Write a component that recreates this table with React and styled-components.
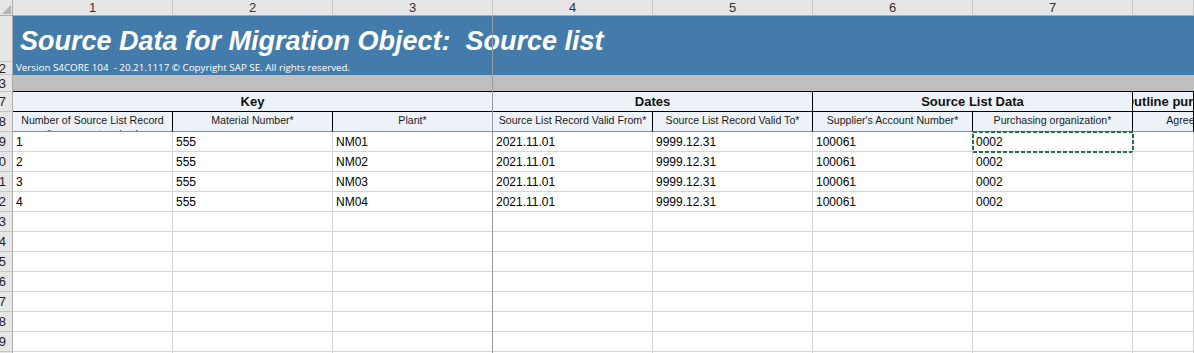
import React from "react";
import styled, { createGlobalStyle } from "styled-components";

const GlobalStyle = createGlobalStyle`
  body {
    margin: 0;
    background: #ffffff;
    overflow: hidden;
  }
`;

const COLS = [160, 160, 160, 160, 160, 160, 160, 61];

const Sheet = styled.div`
  position: relative;
  width: 1194px;
  height: 353px;
  overflow: hidden;
  font-family: "Liberation Sans", Arial, sans-serif;
  color: #000;
`;

const Row = styled.div`
  display: flex;
  height: ${(p) => p.h}px;
`;

const Corner = styled.div`
  position: relative;
  width: 13px;
  box-sizing: border-box;
  background: #e6e6e6;
  border-right: 1px solid #ababab;
  border-bottom: 1px solid #ababab;

  svg {
    position: absolute;
    right: 1px;
    bottom: 1px;
  }
`;

const ColHead = styled.div`
  width: ${(p) => p.w}px;
  box-sizing: border-box;
  background: #e6e6e6;
  border-right: 1px solid #c6c6c6;
  border-bottom: 1px solid #ababab;
  display: flex;
  align-items: center;
  justify-content: center;
  font-size: 13px;
  color: #333;
`;

const RowHead = styled.div`
  width: 13px;
  flex: none;
  box-sizing: border-box;
  background: #e6e6e6;
  border-right: 1px solid #ababab;
  border-bottom: 1px solid #c6c6c6;
  display: flex;
  align-items: center;
  justify-content: flex-end;
  padding-right: 6px;
  overflow: hidden;
  white-space: nowrap;
  font-size: 13px;
  color: #222;
`;

const Title = styled.div`
  flex: 1;
  background: #437cab;
  color: #fff;
  display: flex;
  align-items: center;
  padding: 5px 0 0 7px;
  white-space: pre;
  font-size: 27px;
  font-weight: 700;
  font-style: italic;
  line-height: 1;
`;

const Version = styled.div`
  flex: 1;
  background: #437cab;
  color: #fff;
  padding: 1px 0 0 3px;
  white-space: pre;
  font-family: "Open Sans", sans-serif;
  font-size: 9.8px;
  line-height: 1;
`;

const Band = styled.div`
  flex: 1;
  background: #bfbfbf;
  border-bottom: 1px solid #000;
`;

const GroupCell = styled.div`
  width: ${(p) => p.w}px;
  flex: none;
  box-sizing: border-box;
  background: #edf2f8;
  border-right: 1px solid #000;
  border-bottom: 1px solid #000;
  display: flex;
  align-items: center;
  justify-content: ${(p) => (p.clip ? "flex-start" : "center")};
  text-indent: ${(p) => (p.clip ? "-9px" : "0")};
  overflow: hidden;
  white-space: nowrap;
  font-weight: 700;
  font-size: 13px;
  color: #111;
`;

const HeadCell = styled.div`
  width: ${(p) => p.w}px;
  flex: none;
  box-sizing: border-box;
  background: #edf2f8;
  border-right: 1px solid #000;
  border-bottom: 1px solid #8c8c8c;
  padding-top: 1px;
  overflow: hidden;
`;

const HeadLabel = styled.div`
  width: 159px;
  text-align: center;
  font-size: 10.6px;
  line-height: 14px;
  color: #1a1a1a;
`;

const Cell = styled.div`
  position: relative;
  width: ${(p) => p.w}px;
  flex: none;
  box-sizing: border-box;
  border-right: 1px solid #d4d4d4;
  border-bottom: 1px solid #d4d4d4;
  padding: 3px 0 0 3px;
  font-size: 12px;
  line-height: 14px;
  white-space: nowrap;
`;

const Selection = styled.svg`
  position: absolute;
  left: -1px;
  top: -1px;
`;

const FreezeLine = styled.div`
  position: absolute;
  left: 492px;
  top: 16px;
  bottom: 0;
  width: 1px;
  background: #9a9a9a;
`;

const headers = [
  "Number of Source List Record (legacy system key)",
  "Material Number*",
  "Plant*",
  "Source List Record Valid From*",
  "Source List Record Valid To*",
  "Supplier's Account Number*",
  "Purchasing organization*",
  "Agreement Number",
];

const data = [
  ["1", "555", "NM01", "2021.11.01", "9999.12.31", "100061", "0002", ""],
  ["2", "555", "NM02", "2021.11.01", "9999.12.31", "100061", "0002", ""],
  ["3", "555", "NM03", "2021.11.01", "9999.12.31", "100061", "0002", ""],
  ["4", "555", "NM04", "2021.11.01", "9999.12.31", "100061", "0002", ""],
];

const groups = [
  { label: "Key", w: 480 },
  { label: "Dates", w: 320 },
  { label: "Source List Data", w: 320 },
  { label: "Outline purchase agreement", w: 61, clip: true },
];

export default function App() {
  const rows = [];
  for (let r = 0; r < 12; r++) {
    rows.push(data[r] || ["", "", "", "", "", "", "", ""]);
  }

  return (
    <>
      <GlobalStyle />
      <Sheet>
        <Row h={16}>
          <Corner>
            <svg width="9" height="9">
              <polygon points="9,0 9,9 0,9" fill="#b4b4b4" />
            </svg>
          </Corner>
          {COLS.map((w, i) => (
            <ColHead key={i} w={w}>
              {i < 7 ? i + 1 : ""}
            </ColHead>
          ))}
        </Row>

        <Row h={46}>
          <RowHead />
          <Title>Source Data for Migration Object:  Source list</Title>
        </Row>
        <Row h={13}>
          <RowHead>2</RowHead>
          <Version>
            Version S4CORE 104  - 20.21.1117 © Copyright SAP SE. All rights reserved.
          </Version>
        </Row>
        <Row h={17}>
          <RowHead>3</RowHead>
          <Band />
        </Row>

        <Row h={20}>
          <RowHead>7</RowHead>
          {groups.map((g) => (
            <GroupCell key={g.label} w={g.w} clip={g.clip}>
              {g.label}
            </GroupCell>
          ))}
        </Row>
        <Row h={20}>
          <RowHead>8</RowHead>
          {headers.map((h, i) => (
            <HeadCell key={h} w={COLS[i]}>
              <HeadLabel>{h}</HeadLabel>
            </HeadCell>
          ))}
        </Row>

        {rows.map((cells, r) => (
          <Row h={20} key={r}>
            <RowHead>{r + 9}</RowHead>
            {cells.map((v, c) => (
              <Cell key={c} w={COLS[c]}>
                {v}
                {r === 0 && c === 6 && (
                  <Selection width="162" height="22">
                    <rect
                      x="1"
                      y="1"
                      width="160"
                      height="20"
                      fill="none"
                      stroke="#217346"
                      strokeWidth="2"
                      strokeDasharray="4 2"
                    />
                  </Selection>
                )}
              </Cell>
            ))}
          </Row>
        ))}

        <FreezeLine />
      </Sheet>
    </>
  );
}
